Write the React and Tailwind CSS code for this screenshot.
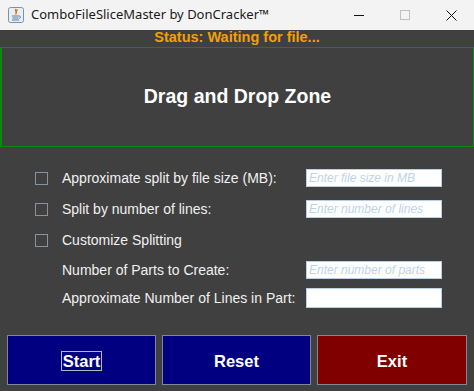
import React from "react";

function JavaIcon() {
  return (
    <svg width="16" height="16" viewBox="0 0 16 16">
      <rect x="0.5" y="0.5" width="15" height="15" rx="2" fill="#e8eef6" stroke="#7a8fa8" />
      <path d="M8 2 C6 4 10 5 7.5 7.5 C9.5 6 7 4.5 9.5 2.5" fill="none" stroke="#e76f00" strokeWidth="1.3" />
      <path d="M4 9 H11 M4.5 11 H10.5 M4 13 H11" stroke="#5382a1" strokeWidth="1.1" />
      <path d="M11 9 C13 9 13 11 11 11.5" fill="none" stroke="#5382a1" strokeWidth="1" />
    </svg>
  );
}

function Check() {
  return <div className="w-[13px] h-[13px] border border-[#8a929c] shrink-0" />;
}

function Input({ placeholder }) {
  return (
    <div className="w-[136px] h-[18px] bg-white border border-[#b8cfe5] flex items-center px-[2px] text-[12px] italic text-[#bcd3ea] leading-none">
      {placeholder}
    </div>
  );
}

export default function App() {
  return (
    <div className="w-[474px] h-[391px] flex flex-col bg-[#404040] overflow-hidden" style={{ fontFamily: '"Liberation Sans", Arial, sans-serif' }}>
      <div className="h-[30px] bg-[#f3f3f3] flex items-center shrink-0">
        <div className="ml-[8px] mr-[7px] flex items-center"><JavaIcon /></div>
        <div className="text-[13px] text-[#1a1a1a]" style={{ fontFamily: '"Noto Sans", "Open Sans", sans-serif' }}>ComboFileSliceMaster by DonCracker™</div>
        <div className="ml-auto flex items-center h-full">
          <div className="w-[46px] h-full flex items-center justify-center">
            <div className="w-[10px] h-px bg-[#111]" />
          </div>
          <div className="w-[46px] h-full flex items-center justify-center">
            <div className="w-[10px] h-[10px] border border-[#c0c0c0]" />
          </div>
          <div className="w-[46px] h-full flex items-center justify-center">
            <svg width="11" height="11" viewBox="0 0 11 11"><path d="M0.5 0.5 L10.5 10.5 M10.5 0.5 L0.5 10.5" stroke="#111" strokeWidth="1" /></svg>
          </div>
        </div>
      </div>
      <div className="h-[17px] pb-[2px] flex items-center justify-center text-[14.5px] font-bold text-[#f5a000] leading-none shrink-0">
        Status: Waiting for file...
      </div>
      <div className="h-[100px] border border-l-2 border-[#0a8a0a] flex items-center justify-center text-[19.5px] font-bold text-white shrink-0">
        Drag and Drop Zone
      </div>
      <div className="flex flex-col pl-[35px] pt-[22px] text-[14px] text-[#f0f0f0] leading-none">
        <div className="h-[18px] flex items-center">
          <Check /><span className="ml-[14px] w-[244px]">Approximate split by file size (MB):</span><Input placeholder="Enter file size in MB" />
        </div>
        <div className="h-[18px] mt-[13px] flex items-center">
          <Check /><span className="ml-[14px] w-[244px]">Split by number of lines:</span><Input placeholder="Enter number of lines" />
        </div>
        <div className="h-[18px] mt-[13px] flex items-center">
          <Check /><span className="ml-[14px]">Customize Splitting</span>
        </div>
        <div className="h-[18px] mt-[12px] flex items-center">
          <span className="ml-[27px] w-[244px]">Number of Parts to Create:</span><Input placeholder="Enter number of parts" />
        </div>
        <div className="h-[20px] mt-[9px] flex items-center">
          <span className="ml-[27px] w-[244px]">Approximate Number of Lines in Part:</span>
          <div className="w-[136px] h-[20px] bg-white border border-[#b8cfe5]" />
        </div>
      </div>
      <div className="mt-[27px] flex gap-[6px] pl-[7px] text-[16.5px] font-bold text-white">
        <div className="w-[149px] h-[50px] bg-[#000080] border border-[#7d8a96] flex items-center justify-center pt-[2px]">
          <span className="border border-[#b0b8c8] px-px leading-[18px]">Start</span>
        </div>
        <div className="w-[149px] h-[50px] bg-[#000080] border border-[#7d8a96] flex items-center justify-center pt-[2px]">Reset</div>
        <div className="w-[150px] h-[50px] bg-[#800000] border border-[#7d8a96] flex items-center justify-center pt-[2px]">Exit</div>
      </div>
    </div>
  );
}
